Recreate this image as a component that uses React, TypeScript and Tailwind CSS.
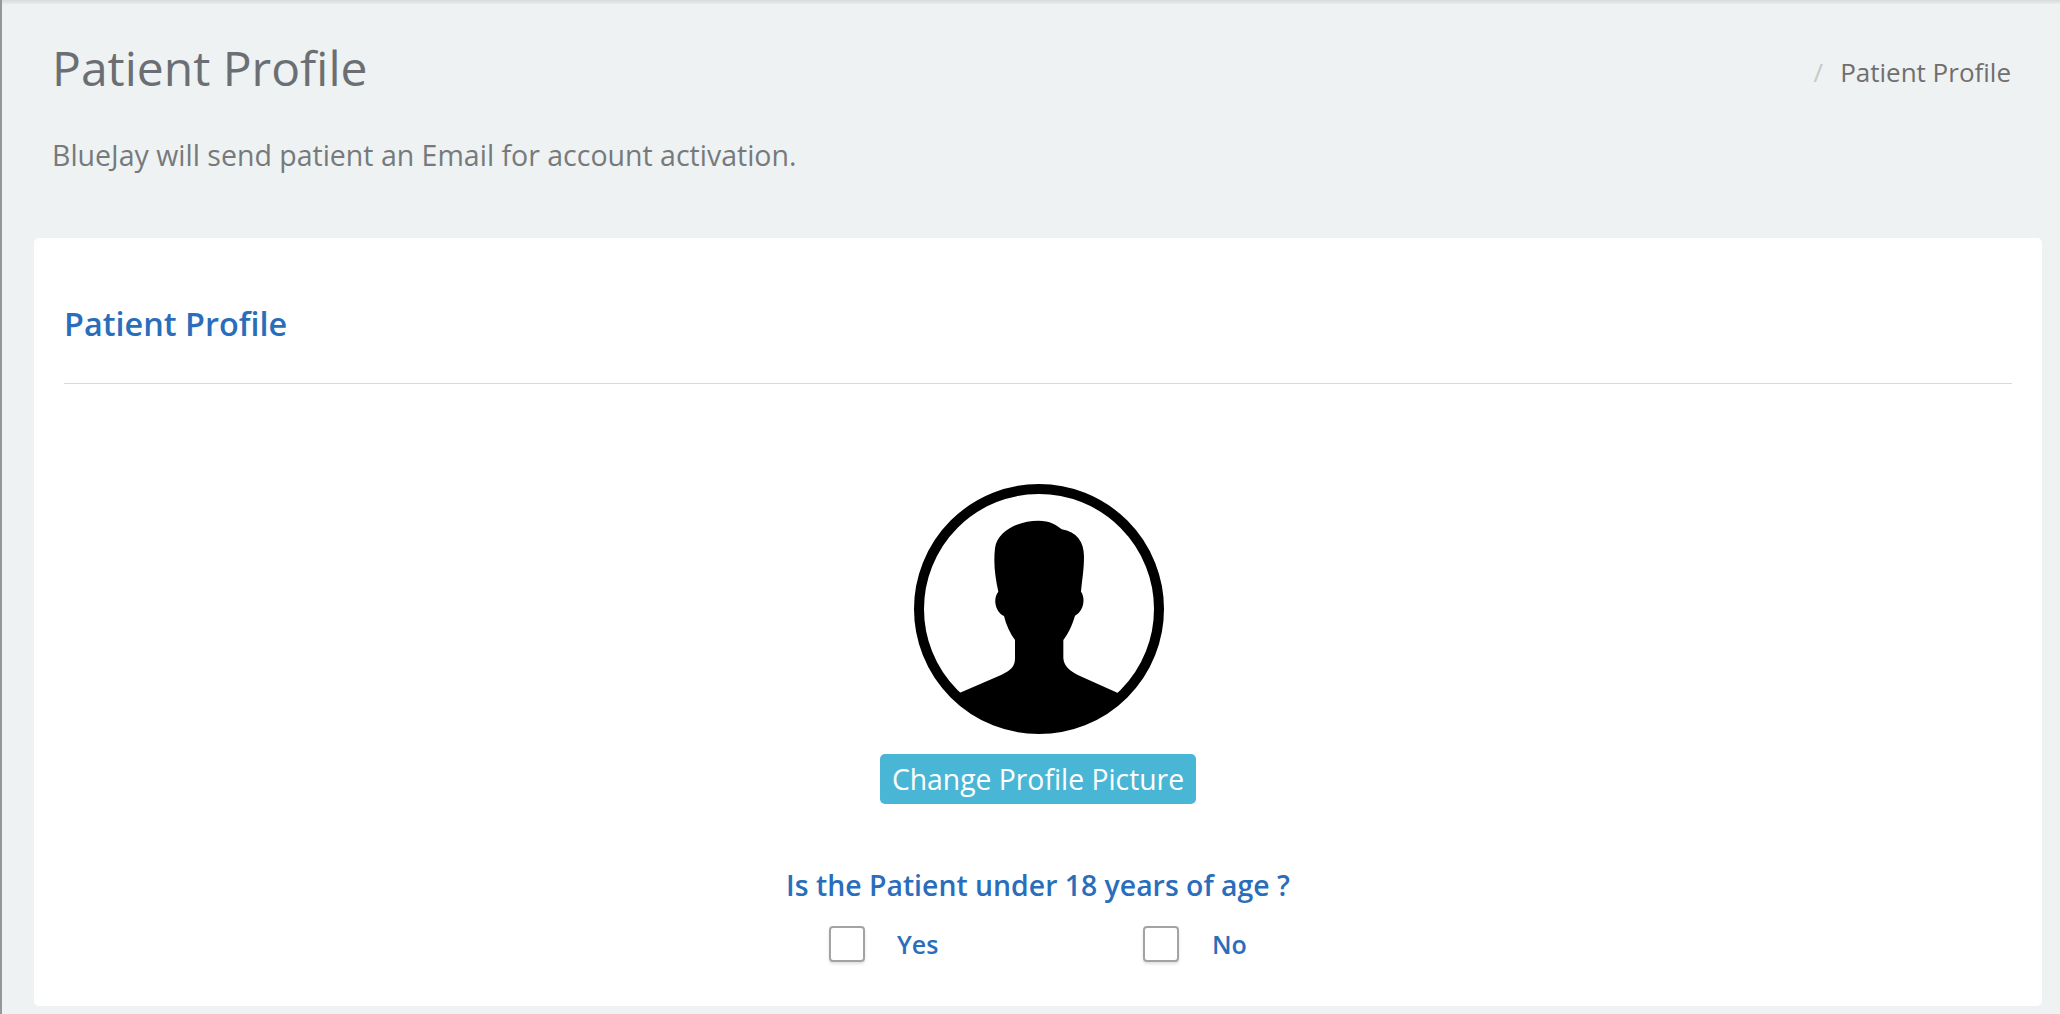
function Avatar() {
  return (
    <svg viewBox="102 42 750 750" className="w-[250px] h-[250px] ml-[2px]">
      <circle cx="477" cy="417" r="360" fill="#fff" stroke="#000" strokeWidth="30" />
      <path
        d="M240 668 L365 614 C392 602 405 590 405 565 L405 510 C390 490 378 465 372 438 C345 425 338 385 355 365 C345 320 340 280 345 235 C352 180 420 152 475 152 C510 152 530 165 545 178 C590 185 612 215 612 260 C612 300 606 330 603 365 C618 385 610 425 585 437 C575 470 565 490 550 510 L550 565 C552 592 575 606 600 618 L712 668 L723 680 A360 360 0 0 1 231 680 Z"
        fill="#000"
      />
    </svg>
  );
}

function Option({ label, labelClass }: { label: string; labelClass: string }) {
  return (
    <label className="flex items-center">
      <span className="block w-[36px] h-[36px] rounded-[4px] bg-white border-2 border-[#a3a3a3] shadow-[0_2px_3px_rgba(0,0,0,0.12)]" />
      <span className={`text-[25px] leading-none font-semibold text-[#2a6ebb] ${labelClass}`}>{label}</span>
    </label>
  );
}

export default function App() {
  return (
    <div className="h-[1014px] overflow-hidden bg-[#eef2f3] border-l-2 border-[#979797] font-['Open_Sans',sans-serif]">
      <div className="h-1 bg-gradient-to-b from-[#d9dadb] to-[#e9ebed]" />

      {/* Page header */}
      <div className="flex justify-between items-start pl-[50px] pr-[49px] pt-[31px]">
        <h1 className="text-[48px] leading-[66px] text-[#6b6f73]">Patient Profile</h1>
        <div className="flex items-center pt-[19px] text-[26px] leading-[36px] text-[#716f6e]">
          <span className="text-[#c8c8c8] mr-[17px]">/</span>
          <span>Patient Profile</span>
        </div>
      </div>
      <p className="pl-[50px] pt-[35px] text-[28.5px] leading-[38px] text-[#767a7c]">
        BlueJay will send patient an Email for account activation.
      </p>

      {/* Card */}
      <div className="mt-[64px] ml-[32px] mr-[18px] h-[768px] bg-white rounded-[5px] px-[30px]">
        <h2 className="pt-[64px] text-[32.4px] leading-[42px] font-semibold text-[#2a6ebb]">Patient Profile</h2>
        <div className="mt-[39px] border-t border-[#d9d9d9]" />

        <div className="flex flex-col items-center pt-[100px]">
          <Avatar />
          <button className="mt-[20px] h-[50px] w-[316px] rounded-[5px] bg-[#4ab6d6] text-white text-[28.3px] leading-none">
            Change Profile Picture
          </button>
          <p className="mt-[62px] text-[28.4px] leading-[38px] font-semibold text-[#2a6ebb]">
            Is the Patient under 18 years of age ?
          </p>
          <div className="flex mt-[22px]">
            <Option label="Yes" labelClass="ml-[32px] w-[246px]" />
            <Option label="No" labelClass="ml-[33px] w-[35px]" />
          </div>
        </div>
      </div>
    </div>
  );
}
